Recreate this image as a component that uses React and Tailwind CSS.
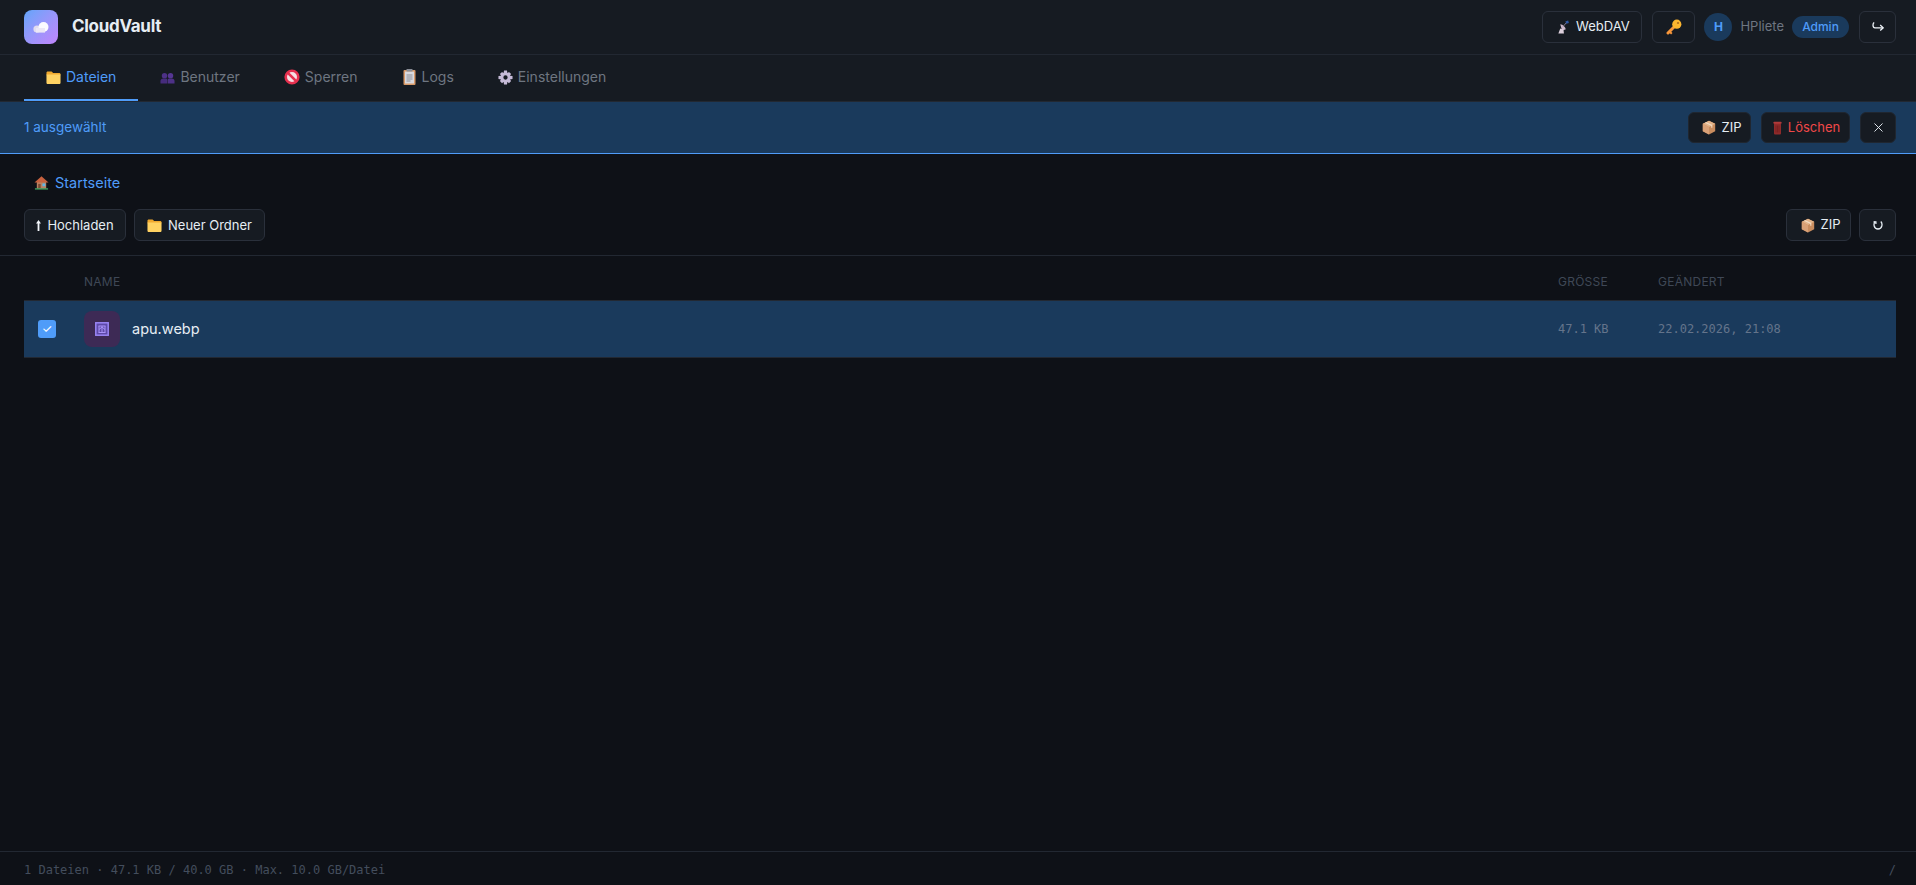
import { X } from 'lucide-react';

const sans = "font-['Inter','Noto_Sans',sans-serif]";
const mono = "font-['DejaVu_Sans_Mono','Liberation_Mono',monospace]";

// small emoji-like drawings, the page's emoji font is not installed here
const FolderIcon = ({ size = 15 }) => (
  <svg width={size} height={size} viewBox="0 0 16 16">
    <path d="M.5 3C.5 2.2 1 1.500 1.900 1.500h4l1.800 1.800h6.400c.8 0 1.400.6 1.400 1.400v1H.5z" fill="#f0a92e" />
    <path d="M.5 4.900h15v8.700c0 .8-.6 1.400-1.400 1.400H1.900c-.8 0-1.400-.6-1.400-1.400z" fill="#ffd262" />
  </svg>
);
const PeopleIcon = () => (
  <svg width="15" height="15" viewBox="0 0 16 16">
    <circle cx="4.800" cy="6" r="2.900" fill="#4d3187" />
    <circle cx="11.200" cy="6" r="2.900" fill="#553693" />
    <path d="M.5 14.500v-2.800c0-1.600 1.200-2.700 2.800-2.700h3.200c1 0 1.300.8 1.300 2v3.500z" fill="#462c7d" />
    <path d="M8.300 14.500v-3.500c0-1.200.3-2 1.300-2h3.100c1.600 0 2.800 1.100 2.800 2.700v2.800z" fill="#4d3187" />
  </svg>
);
const BanIcon = () => (
  <svg width="16" height="16" viewBox="0 0 16 16">
    <circle cx="8" cy="8" r="6.300" fill="#f6dfe4" stroke="#e6304f" strokeWidth="2.600" />
    <path d="M3.600 3.600l8.800 8.800" stroke="#e6304f" strokeWidth="2.600" />
  </svg>
);
const ClipboardIcon = () => (
  <svg width="15" height="16" viewBox="0 0 15 16">
    <rect x="1.500" y="1" width="12" height="15" rx="1" fill="#d99a68" />
    <rect x="3" y="2.500" width="9" height="12" fill="#d9d9de" />
    <path d="M4.500 6h6M4.500 8h6M4.500 10h6M4.500 12h4" stroke="#8b8d96" strokeWidth="1" />
    <rect x="4.500" y="0" width="6" height="2.500" rx=".5" fill="#8a8d96" />
  </svg>
);
const GearIcon = () => (
  <svg width="15" height="15" viewBox="0 0 16 16">
    <path d="M6.400.5h3.200l.4 3h-4zM6.400 15.500h3.200l.4-3h-4zM.5 6.400v3.200l3 .4v-4zM15.500 6.400v3.200l-3 .4v-4zM2 4.300L4.300 2l2.300 2-2.600 2.600zM14 4.300L11.700 2 9.400 4l2.600 2.600zM2 11.700L4.300 14l2.300-2-2.600-2.600zM14 11.700L11.700 14l-2.300-2 2.600-2.600z" fill="#c6bbd8" />
    <circle cx="8" cy="8" r="3.800" fill="none" stroke="#c6bbd8" strokeWidth="3" />
  </svg>
);
const SatelliteIcon = () => (
  <svg width="13" height="14" viewBox="0 0 14 15">
    <path d="M9 1.500l3-1 .8 2.600-2.800.9z" fill="#2f5aa8" />
    <path d="M3.500 4.500c3 .3 5.300 2.600 6 5.500L5.500 11.500z" fill="#cdb9cc" />
    <path d="M1.500 14.500l2-5.500 3.500 1.500.5 4z" fill="#dccfdc" />
    <path d="M6.500 7l3.300-3.800" stroke="#8d7e96" strokeWidth="1" />
  </svg>
);
const KeyIcon = () => (
  <svg width="16" height="16" viewBox="0 0 16 16">
    <path d="M2 14l6.500-6.500" stroke="#f7963a" strokeWidth="3" strokeLinecap="round" />
    <path d="M4 13l1.800 1.800" stroke="#f7963a" strokeWidth="2" />
    <circle cx="10.800" cy="5.200" r="4.600" fill="#fdb62f" />
    <circle cx="12" cy="4" r="1.100" fill="#a96a1e" />
  </svg>
);
const BoxIcon = () => (
  <svg width="14" height="15" viewBox="0 0 14 15">
    <path d="M7 .8l6.200 3v7.400L7 14.400.8 11.200V3.800z" fill="#c98d5f" />
    <path d="M7 .8l6.200 3L7 6.900.8 3.800z" fill="#e3b48a" />
    <path d="M7 6.900v7.500L.8 11.200V3.800z" fill="#d9a177" />
    <path d="M3.600 2.400l6.200 3v2.400" stroke="#f2dcc4" strokeWidth="1.100" fill="none" />
  </svg>
);
const TrashIcon = () => (
  <svg width="9" height="14" viewBox="0 0 9 14">
    <rect x="1" y="2" width="7" height="11.500" rx="1" fill="#8f2a2a" />
    <rect x=".3" y=".8" width="8.400" height="2" rx="1" fill="#b03a3a" />
    <path d="M3 4.500v7M4.500 4.500v7M6 4.500v7" stroke="#6f1d1d" strokeWidth=".7" />
  </svg>
);
const HouseIcon = () => (
  <svg width="15" height="15" viewBox="0 0 16 16">
    <rect x="3" y="7" width="10" height="7.500" fill="#b98263" />
    <path d="M.5 8L8 1.200 15.500 8z" fill="#c8623f" />
    <rect x="9" y="9" width="3" height="3" fill="#5fb7e8" />
    <rect x="4.500" y="9.500" width="2.600" height="5" fill="#7a4a33" />
    <rect x="1" y="14.200" width="14" height="1.300" fill="#46b16a" />
  </svg>
);
const UpArrowIcon = () => (
  <svg width="5" height="11" viewBox="0 0 5 11">
    <path d="M2.500 0L5 3.600H3.400V11H1.600V3.600H0z" fill="#f2f6fb" />
  </svg>
);
const PictureIcon = () => (
  <svg width="14" height="14" viewBox="0 0 14 14" fill="none">
    <rect x=".8" y=".8" width="12.400" height="12.400" fill="#5e4aa8" stroke="#9a86f5" strokeWidth="1.500" />
    <path d="M3.500 4h7M4 4v6.500M7 4v6.500M10 4v6.500M3.500 10.500h7M4 7.500l3-2.500 3 2.500" stroke="#a893f8" strokeWidth="1" />
  </svg>
);
const LogoutArrow = () => (
  <svg width="12" height="11" viewBox="0 0 12 11" fill="none" stroke="#eef3f8" strokeWidth="1.300">
    <path d="M2.200 .5C.6 1.500.4 5.800 3 5.800h8" />
    <path d="M8.200 3l3 2.800-3 2.800" />
  </svg>
);
const RefreshArrow = () => (
  <svg width="10" height="10" viewBox="0 0 10 10" fill="none" stroke="#e6edf3" strokeWidth="1.300">
    <path d="M2.200 1.500C.2 3.500.6 9 5 9s4.800-5.500 2.800-7.500" />
    <path d="M.5 1.800h2.400v2.200" />
  </svg>
);
const CloudLogo = () => (
  <div className="flex h-[34px] w-[34px] items-center justify-center rounded-lg bg-gradient-to-br from-[#60a5fa] to-[#c084fc]">
    <svg width="18" height="12" viewBox="0 0 18 12">
      <circle cx="5" cy="8" r="3.600" fill="#e2ddf0" />
      <circle cx="11.500" cy="6" r="5" fill="#fbfbff" />
      <rect x="4" y="7" width="9" height="4.600" fill="#ece8f6" />
    </svg>
  </div>
);

const tabs = [
  { icon: <FolderIcon />, label: 'Dateien', active: true },
  { icon: <PeopleIcon />, label: 'Benutzer' },
  { icon: <BanIcon />, label: 'Sperren' },
  { icon: <ClipboardIcon />, label: 'Logs' },
  { icon: <GearIcon />, label: 'Einstellungen' },
];

const Btn = ({ children, className = '' }) => (
  <button className={`flex items-center justify-center gap-1.5 whitespace-nowrap rounded-md border text-[13px] text-[#e6edf3] ${className}`}>
    {children}
  </button>
);

export default function App() {
  return (
    <div className={`flex h-[885px] flex-col overflow-hidden bg-[#0e1117] text-[#e6edf3] ${sans}`}>
      {/* Header */}
      <header className="flex h-[55px] shrink-0 items-center justify-between border-b border-[#222832] bg-[#161b22] pl-6 pr-5">
        <div className="flex items-center gap-[14px]">
          <CloudLogo />
          <span className="text-[17px] font-bold tracking-[-0.3px] text-[#e6edf3]">CloudVault</span>
        </div>
        <div className="flex items-center gap-2.5">
          <Btn className="h-8 w-[100px] border-[#2a303b] pl-0.5"><SatelliteIcon /> WebDAV</Btn>
          <Btn className="h-8 w-[43px] border-[#2a303b]"><KeyIcon /></Btn>
          <div className="-ml-px flex items-center">
            <div className="flex h-7 w-7 items-center justify-center rounded-full bg-[#1a3a5c] text-xs font-bold text-[#4f9cf9]">H</div>
            <span className="ml-2 text-[13px] text-[#6e7681]">HPliete</span>
            <span className="ml-2 flex h-[22px] w-[57px] items-center justify-center rounded-full bg-[#1a3a5c] text-xs font-medium text-[#4f9cf9]">Admin</span>
          </div>
          <Btn className="h-8 w-[37px] border-[#2a303b]"><LogoutArrow /></Btn>
        </div>
      </header>

      {/* Tabs */}
      <nav className="flex h-[47px] shrink-0 items-stretch border-b border-[#222832] bg-[#161b22] px-6">
        {tabs.map((tab) => (
          <div
            key={tab.label}
            className={`flex items-center gap-[5px] border-b-2 px-[22px] text-sm ${tab.active ? 'border-[#4f9cf9] text-[#4f9cf9]' : 'border-transparent text-[#6e7681]'}`}
          >
            {tab.icon}
            <span>{tab.label}</span>
          </div>
        ))}
      </nav>

      {/* Selection bar */}
      <div className="flex h-[52px] shrink-0 items-center justify-between border-b border-[#4f9cf9] bg-[#1a3a5c] pl-6 pr-5">
        <span className="text-[13.5px] text-[#4f9cf9]">1 ausgewählt</span>
        <div className="flex items-center gap-2.5">
          <Btn className="h-[31px] w-[63px] border-[#1f2630] bg-[#161b22] pl-1"><BoxIcon /> ZIP</Btn>
          <Btn className="h-[31px] w-[89px] gap-1 border-[#1f2630] bg-[#161b22] pl-0.5 !text-[#f04848]"><TrashIcon /> Löschen</Btn>
          <Btn className="h-[31px] w-[36px] border-[#1f2630] bg-[#161b22]"><X size={15} strokeWidth={1.5} /></Btn>
        </div>
      </div>

      {/* Breadcrumb */}
      <div className="flex h-[55px] shrink-0 items-center gap-1.5 px-[34px] pt-0.5 text-[14.5px] text-[#4f9cf9]">
        <HouseIcon />
        <span>Startseite</span>
      </div>

      {/* Toolbar */}
      <div className="flex h-[47px] shrink-0 items-start justify-between border-b border-[#222832] pl-6 pr-5">
        <div className="flex gap-2">
          <Btn className="h-8 w-[102px] border-[#2a303b] bg-[#161b22] pt-px"><UpArrowIcon /> Hochladen</Btn>
          <Btn className="h-8 w-[131px] border-[#2a303b] bg-[#161b22] pt-px"><FolderIcon /> Neuer Ordner</Btn>
        </div>
        <div className="flex gap-2">
          <Btn className="h-8 w-[65px] border-[#2a303b] bg-[#161b22] pl-1"><BoxIcon /> ZIP</Btn>
          <Btn className="h-8 w-[37px] border-[#2a303b] bg-[#161b22]"><RefreshArrow /></Btn>
        </div>
      </div>

      {/* File table */}
      <main className="flex-1 pl-6 pr-5">
        <div className="flex h-[45px] items-center border-b border-[#222832] pt-2 text-xs tracking-[0.25px] text-[#3f4856]">
          <div className="w-[60px]" />
          <div className="flex-1">NAME</div>
          <div className="w-[100px]">GRÖSSE</div>
          <div className="w-[238px]">GEÄNDERT</div>
        </div>
        <div className="flex h-[57px] items-center border-b border-[#222832] bg-[#1a3a5c]">
          <div className="w-[60px] pl-[14px]">
            <div className="flex h-[18px] w-[18px] items-center justify-center rounded-[3px] bg-[#4f9cf9] text-xs text-white">✓</div>
          </div>
          <div className="flex flex-1 items-center gap-3">
            <div className="flex h-9 w-9 items-center justify-center rounded-lg bg-[#3d2a55]"><PictureIcon /></div>
            <span className="text-[14.5px] text-[#e6edf3]">apu.webp</span>
          </div>
          <div className={`w-[100px] text-xs text-[#64748b] ${mono}`}>47.1 KB</div>
          <div className={`w-[238px] text-xs text-[#64748b] ${mono}`}>22.02.2026, 21:08</div>
        </div>
      </main>

      {/* Footer */}
      <footer className={`flex h-[34px] shrink-0 items-center justify-between border-t border-[#222832] pl-6 pr-5 pt-0.5 text-xs text-[#434d5c] ${mono}`}>
        <span>1 Dateien · 47.1 KB / 40.0 GB · Max. 10.0 GB/Datei</span>
        <span>/</span>
      </footer>
    </div>
  );
}
